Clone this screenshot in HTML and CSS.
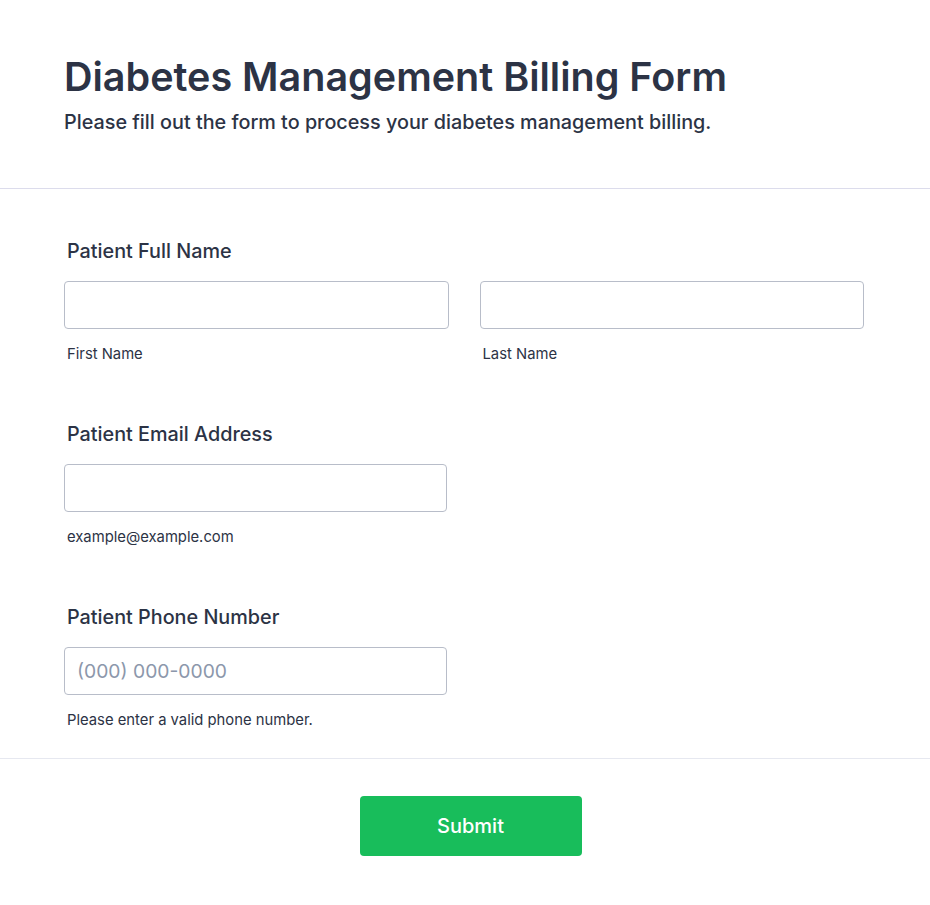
FILE: index.html
```html
<!DOCTYPE html>
<html lang="en">
<head>
    <meta charset="UTF-8">
    <meta name="viewport" content="width=device-width, initial-scale=1.0">
    <title>Diabetes Management Billing Form</title>
    <link rel="stylesheet" href="styles.css">
</head>
<body>
    <form class="form" onsubmit="return false;">
        <div class="form-header">
            <h1>Diabetes Management Billing Form</h1>
            <p class="subtitle">Please fill out the form to process your diabetes management billing.</p>
        </div>

        <div class="form-body">
            <div class="field">
                <label class="field-label">Patient Full Name</label>
                <div class="field-row">
                    <div class="field-col">
                        <input type="text" id="firstName">
                        <label class="sublabel" for="firstName">First Name</label>
                    </div>
                    <div class="field-col">
                        <input type="text" id="lastName">
                        <label class="sublabel" for="lastName">Last Name</label>
                    </div>
                </div>
            </div>

            <div class="field">
                <label class="field-label" for="email">Patient Email Address</label>
                <div class="field-col half">
                    <input type="email" id="email">
                    <label class="sublabel" for="email">example@example.com</label>
                </div>
            </div>

            <div class="field">
                <label class="field-label" for="phone">Patient Phone Number</label>
                <div class="field-col half">
                    <input type="tel" id="phone" placeholder="(000) 000-0000">
                    <label class="sublabel" for="phone">Please enter a valid phone number.</label>
                </div>
            </div>
        </div>

        <div class="form-footer">
            <button type="submit" class="submit-button">Submit</button>
        </div>
    </form>
</body>
</html>
```

FILE: styles.css
```css
* {
    box-sizing: border-box;
}
body {
    margin: 0;
    font-family: Inter, 'Noto Sans', sans-serif;
    background-color: #fff;
    color: #2c3345;
}
.form-header {
    padding: 53px 64px 52px;
    border-bottom: 1px solid #dcdcec;
}
h1 {
    margin: 0 0 8px;
    font-size: 39.5px;
    line-height: 48px;
    font-weight: 600;
    color: #2c3345;
}
.subtitle {
    margin: 0;
    font-size: 19.8px;
    line-height: 27px;
    font-weight: 500;
}
.form-body {
    padding: 50px 66px 28px 64px;
    border-bottom: 1px solid #e6e8f0;
}
.field {
    margin-bottom: 58px;
}
.field:last-child {
    margin-bottom: 0;
}
.field-label {
    display: block;
    padding-left: 3px;
    margin-bottom: 18px;
    font-size: 19.8px;
    line-height: 24px;
    font-weight: 500;
}
.field-row {
    display: flex;
    gap: 31px;
}
.field-col {
    flex: 1;
}
.field-col.half {
    width: 383px;
}
input {
    display: block;
    width: 100%;
    height: 48px;
    padding: 0 12px;
    border: 1px solid #b8bdc9;
    border-radius: 4px;
    font-family: inherit;
    font-size: 19.3px;
    color: #2c3345;
}
input::placeholder {
    color: #8c97ab;
}
.sublabel {
    display: block;
    padding-left: 3px;
    margin-top: 15px;
    font-size: 14.8px;
    line-height: 20px;
    color: #2c3345;
}
.form-footer {
    display: flex;
    justify-content: center;
    padding: 37px 0 40px 11px;
}
.submit-button {
    width: 222px;
    height: 60px;
    border: none;
    border-radius: 4px;
    background-color: #18bd5b;
    color: #fff;
    font-family: inherit;
    font-size: 20px;
    font-weight: 500;
    cursor: pointer;
}
```
